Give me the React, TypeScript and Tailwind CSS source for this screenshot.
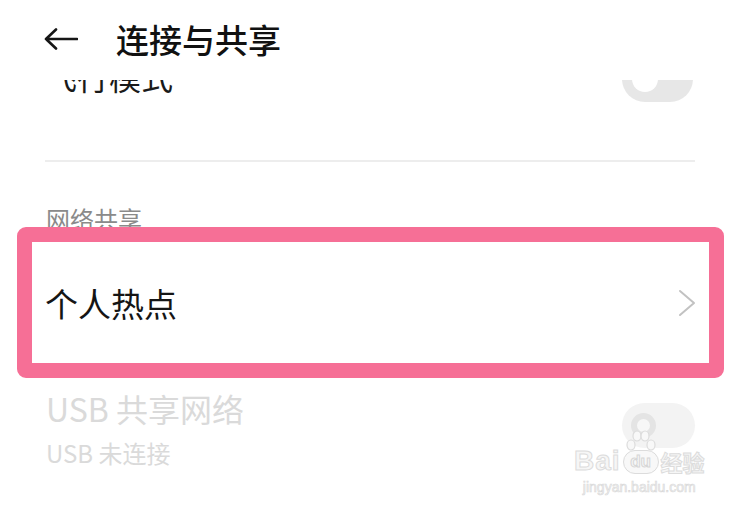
import React from 'react';

const font = { fontFamily: '"Noto Sans CJK SC", "Noto Sans", sans-serif' };

const BackArrow: React.FC = () => (
  <svg width="34" height="22" viewBox="0 0 34 22" fill="none" stroke="#161616" strokeWidth="2.6" strokeLinecap="round" strokeLinejoin="round">
    <path d="M2 11H33M12 1.5L2 11L12 20.5" />
  </svg>
);

const Chevron: React.FC = () => (
  <svg width="18" height="28" viewBox="0 0 18 28" fill="none" stroke="#c2c2c2" strokeWidth="2" strokeLinecap="round" strokeLinejoin="round">
    <path d="M2 2L16 14L2 26" />
  </svg>
);

const Watermark: React.FC = () => (
  <div className="absolute left-[574px] top-[430px] flex flex-col items-center pointer-events-none select-none">
    <div className="flex items-end">
      <span
        className="text-[28px] leading-[26px] font-bold tracking-[1px] text-[#f6f6f6] [-webkit-text-stroke:1px_#dcdcdc]"
        style={{ fontFamily: '"Liberation Sans", sans-serif' }}
      >
        Bai
      </span>
      <div className="relative w-[40px] h-[44px] flex flex-col items-center justify-end">
        <svg width="34" height="22" viewBox="0 0 34 22" className="mb-[-2px]" fill="#f8f8f8" stroke="#dcdcdc" strokeWidth="1.2">
          <ellipse cx="7" cy="15" rx="4" ry="5" />
          <ellipse cx="13" cy="6" rx="4" ry="5" />
          <ellipse cx="21" cy="6" rx="4" ry="5" />
          <ellipse cx="27" cy="15" rx="4" ry="5" />
        </svg>
        <div className="w-[36px] h-[24px] rounded-full border border-[#dcdcdc] bg-[#f8f8f8] flex items-center justify-center">
          <span className="text-[17px] leading-[18px] font-bold text-[#f6f6f6] [-webkit-text-stroke:1px_#d6d6d6]" style={{ fontFamily: '"Liberation Sans", sans-serif' }}>
            du
          </span>
        </div>
      </div>
      <span className="text-[22px] leading-[26px] font-bold text-[#f6f6f6] [-webkit-text-stroke:1px_#dcdcdc]" style={font}>
        经验
      </span>
    </div>
    <span
      className="mt-[6px] text-[14px] leading-[14px] text-[#f4f4f4] [-webkit-text-stroke:0.6px_#d8d8d8]"
      style={{ fontFamily: '"Liberation Sans", sans-serif' }}
    >
      jingyan.baidu.com
    </span>
  </div>
);

export default function App() {
  return (
    <div className="relative w-[751px] h-[513px] overflow-hidden bg-white" style={font}>
      {/* header */}
      <div className="relative z-10 h-[80px] pb-[2px] flex items-center pl-[44px] bg-white">
        <BackArrow />
        <span className="ml-[38px] text-[33px] leading-[40px] font-medium text-[#111111]">连接与共享</span>
      </div>

      {/* scrolled row, partly hidden under header */}
      <div className="h-[80px] overflow-hidden">
        <div className="-mt-[24px] h-[46px] flex items-center justify-between pl-[45px] pr-[58px]">
          <span className="mb-[6px] text-[32px] leading-[36px] text-[#1a1a1a]">飞行模式</span>
          <div className="w-[71px] h-[46px] rounded-full bg-[#e7e7e7] flex items-center pl-[10px]">
            <div className="w-[26px] h-[26px] rounded-full bg-white" />
          </div>
        </div>
      </div>

      <div className="ml-[45px] mr-[56px] h-[2px] bg-[#ededed]" />

      <div className="mt-[45px] pl-[46px] text-[24px] leading-[24px] text-[#8a8a8a]">网络共享</div>

      {/* hotspot row */}
      <div className="mt-[12px] h-[120px] flex items-center justify-between pl-[45px] pr-[55px]">
        <span className="text-[33px] leading-[40px] text-[#151515]">个人热点</span>
        <Chevron />
      </div>

      {/* usb row, disabled */}
      <div className="pt-[27px] flex items-start justify-between pl-[46px] pr-[56px]">
        <div className="flex flex-col">
          <span className="text-[32px] leading-[36px] text-[#dadada]">USB 共享网络</span>
          <span className="mt-[12px] text-[24px] leading-[30px] text-[#dadada]">USB 未连接</span>
        </div>
        <div className="mt-[13px] w-[73px] h-[45px] rounded-full bg-[#f3f3f3] flex items-center pl-[9px]">
          <div className="w-[25px] h-[25px] rounded-full border-[6px] border-[#e4e4e4] bg-[#f7f7f7]" />
        </div>
      </div>

      {/* highlight annotation */}
      <div className="absolute left-[17px] top-[227px] w-[707px] h-[151px] rounded-[9px] border-[15px] border-[#f66f96]" />

      <Watermark />
    </div>
  );
}
